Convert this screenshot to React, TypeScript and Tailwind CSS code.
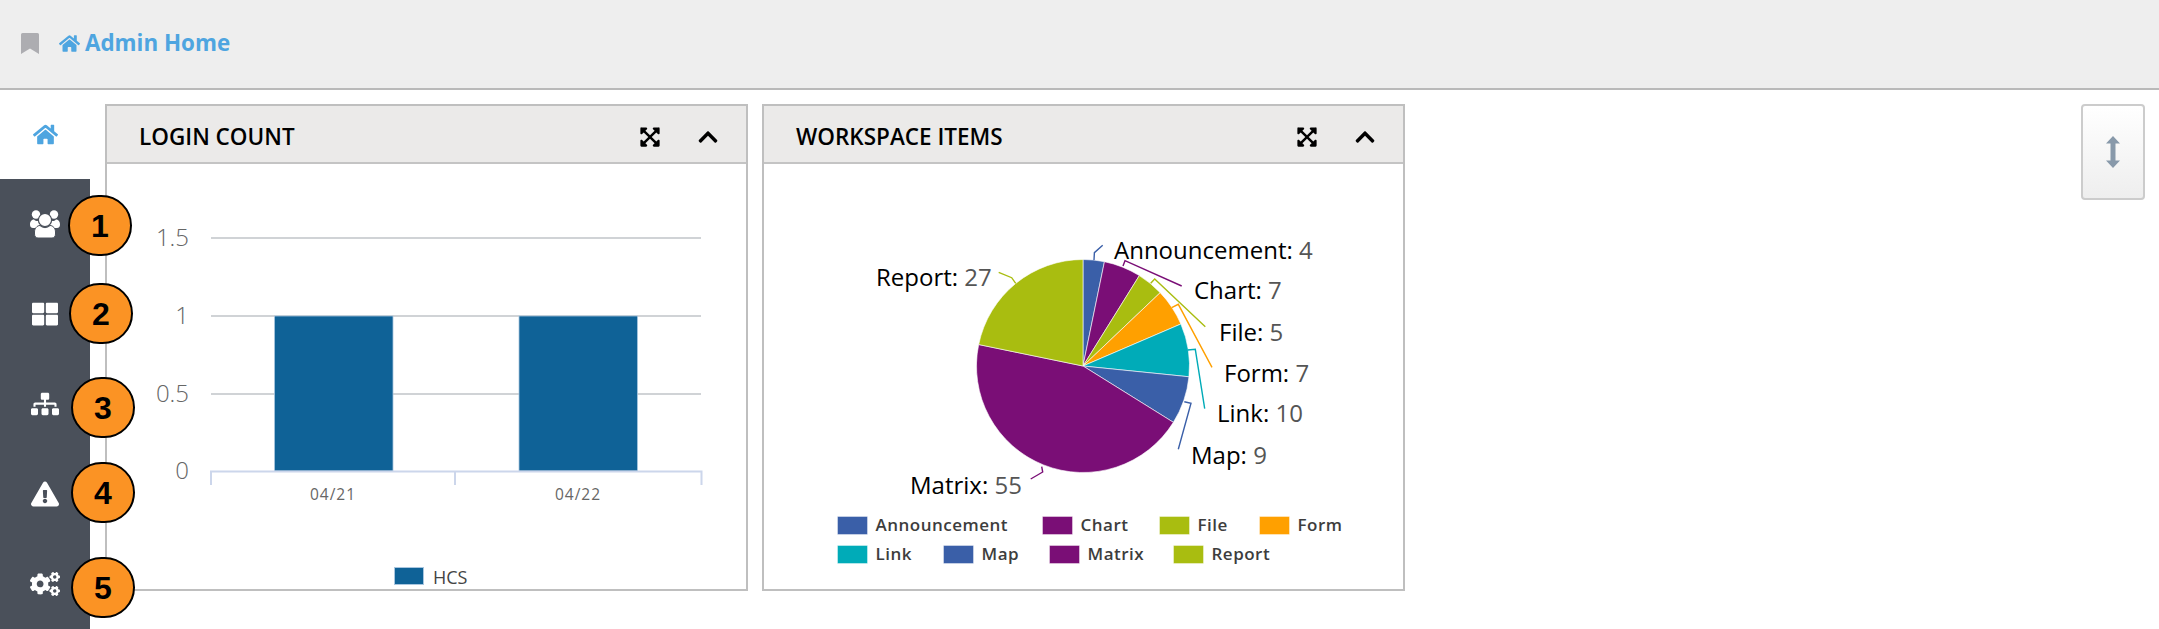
import * as React from 'react';
import {
  FaChevronUp,
  FaCogs,
  FaExclamationTriangle,
  FaExpandArrowsAlt,
  FaHome,
  FaSitemap,
  FaThLarge
} from 'react-icons/fa';

const BLUE = '#3a5fa8';
const PURPLE = '#7a0e76';
const LIME = '#a9bd10';
const ORANGE = '#ffa000';
const TEAL = '#00abb8';

const slices = [
  { name: 'Announcement', value: 4, color: BLUE, line: '1094,260 1094.4,252.7 1102.7,245.3', x: 1114, y: 259 },
  { name: 'Chart', value: 7, color: PURPLE, line: '1123,266 1125,260.7 1181.7,286', x: 1194, y: 299 },
  { name: 'File', value: 5, color: LIME, line: '1150.7,283.3 1154.7,279 1205.3,326.7', x: 1219, y: 341 },
  { name: 'Form', value: 7, color: ORANGE, line: '1171.7,307.7 1178.3,304.3 1212,367.3', x: 1224, y: 382 },
  { name: 'Link', value: 10, color: TEAL, line: '1187.7,350 1195.3,349.3 1204.7,408.7', x: 1217, y: 422 },
  { name: 'Map', value: 9, color: BLUE, line: '1184.3,401.7 1191,403.3 1178.3,449.3', x: 1191, y: 464 },
  { name: 'Matrix', value: 55, color: PURPLE, line: '1041.7,466.7 1042.7,472 1030.7,479', x: 910, y: 494 },
  { name: 'Report', value: 27, color: LIME, line: '1015.7,283.3 1011.7,277.7 998.7,272.3', x: 876, y: 286 }
];

const pieLegend = [
  { name: 'Announcement', color: BLUE, x: 837, y: 516 },
  { name: 'Chart', color: PURPLE, x: 1042, y: 516 },
  { name: 'File', color: LIME, x: 1159, y: 516 },
  { name: 'Form', color: ORANGE, x: 1259, y: 516 },
  { name: 'Link', color: TEAL, x: 837, y: 545 },
  { name: 'Map', color: BLUE, x: 943, y: 545 },
  { name: 'Matrix', color: PURPLE, x: 1049, y: 545 },
  { name: 'Report', color: LIME, x: 1173, y: 545 }
];

const markers = [
  { label: '1', left: 'left-[68px]', top: 'top-[195px]' },
  { label: '2', left: 'left-[69px]', top: 'top-[283px]' },
  { label: '3', left: 'left-[71px]', top: 'top-[377px]' },
  { label: '4', left: 'left-[71px]', top: 'top-[462px]' },
  { label: '5', left: 'left-[71px]', top: 'top-[557px]' }
];

function piePaths() {
  const cx = 1083;
  const cy = 366;
  const r = 106.5;
  const total = slices.reduce((sum, s) => sum + s.value, 0);
  let start = 0;
  return slices.map(s => {
    const end = start + (s.value / total) * Math.PI * 2;
    const x1 = cx + r * Math.sin(start);
    const y1 = cy - r * Math.cos(start);
    const x2 = cx + r * Math.sin(end);
    const y2 = cy - r * Math.cos(end);
    const large = end - start > Math.PI ? 1 : 0;
    start = end;
    return { ...s, d: `M${cx} ${cy}L${x1} ${y1}A${r} ${r} 0 ${large} 1 ${x2} ${y2}Z` };
  });
}

// font awesome 4 look, the package only has the newer shapes
function GroupIcon() {
  return (
    <svg viewBox="0 0 30 28" className="h-[28px] w-[30px] fill-white">
      <circle cx="6" cy="4.5" r="4.2" />
      <circle cx="24" cy="4.5" r="4.2" />
      <path d="M0 14.5C0 11 2 9.5 4 9.5C6 11.5 8 11.5 10 10V18H3C1 18 0 16.500 0 14.5Z" />
      <path d="M30 14.500C30 11 28 9.500 26 9.500C24 11.500 22 11.500 20 10V18H27C29 18 30 16.500 30 14.500Z" />
      <circle cx="15" cy="10" r="6.6" stroke="#4a505a" strokeWidth="1.2" />
      <path
        d="M4.500 22C4.500 18.500 7 15.500 10 15.500C13 18.300 17 18.300 20 15.500C23 15.500 25.500 18.500 25.500 22V24C25.500 26.500 24 28 22 28H8C6 28 4.500 26.500 4.500 24Z"
        stroke="#4a505a"
        strokeWidth="1"
      />
    </svg>
  );
}

function Panel({ title, children }: { title: string; children: React.ReactNode }) {
  return (
    <div className="flex h-[487px] w-[643px] flex-col border-2 border-[#bfbfbf]">
      <div className="flex h-[58px] shrink-0 items-center border-b-2 border-[#c4c4c4] bg-[#ebeae9] pt-[6px] pl-[32px]">
        <span className="text-[22.5px] font-semibold text-black">{title}</span>
        <FaExpandArrowsAlt className="ml-auto text-[22px] text-black" />
        <FaChevronUp className="mr-[27px] ml-[36px] text-[22px] text-black" />
      </div>
      <div className="min-h-0 flex-1">{children}</div>
    </div>
  );
}

function LoginChart() {
  const grid = [238, 316, 394];
  return (
    <svg viewBox="107 164 639 425" className="block h-[425px] w-[639px]">
      {grid.map(y => (
        <line key={y} x1={211} x2={701} y1={y} y2={y} stroke="#c0c4c8" strokeWidth={1.5} />
      ))}
      {[
        ['1.5', 246],
        ['1', 324],
        ['0.5', 402],
        ['0', 479]
      ].map(([t, y]) => (
        <text key={t} x={189} y={y} textAnchor="end" className="fill-[#666666] text-[24px] font-light">
          {t}
        </text>
      ))}
      <rect x={274.5} y={316} width={118.5} height={155} fill="#0f6297" stroke="#a9c6df" strokeWidth={0.8} />
      <rect x={519} y={316} width={118.5} height={155} fill="#0f6297" stroke="#a9c6df" strokeWidth={0.8} />
      <path d="M211 485V471.5H701.5V485M455 471.5V485" fill="none" stroke="#ccd6eb" strokeWidth={2} />
      <text x={333} y={500} textAnchor="middle" className="fill-[#666666] text-[15.5px] tracking-[1px]">
        04/21
      </text>
      <text x={578} y={500} textAnchor="middle" className="fill-[#666666] text-[15.5px] tracking-[1px]">
        04/22
      </text>
      <rect x={394.5} y={567.5} width={29} height={17} fill="#0f6297" stroke="#a9c6df" />
      <text x={433} y={584} className="fill-[#444444] text-[18px]">
        HCS
      </text>
    </svg>
  );
}

function WorkspaceChart() {
  return (
    <svg viewBox="764 164 639 425" className="block h-[425px] w-[639px]">
      {piePaths().map(s => (
        <path key={s.name} d={s.d} fill={s.color} stroke="#ffffff" strokeWidth={0.6} />
      ))}
      {slices.map(s => (
        <polyline key={s.name} points={s.line} fill="none" stroke={s.color} strokeWidth={1.4} />
      ))}
      {slices.map(s => (
        <text key={s.name} x={s.x} y={s.y} className="fill-black text-[24px]">
          {s.name}: <tspan className="fill-[#555555]">{s.value}</tspan>
        </text>
      ))}
      {pieLegend.map(l => (
        <g key={l.name}>
          <rect x={l.x + 0.5} y={l.y + 0.5} width={30} height={18} fill={l.color} stroke="#ffffff" strokeOpacity={0.4} />
          <text x={l.x + 38.5} y={l.y + 15} className="fill-[#3d3d3d] text-[17px] font-semibold tracking-[0.5px]">
            {l.name}
          </text>
        </g>
      ))}
    </svg>
  );
}

export default function App() {
  return (
    <div className="relative flex h-screen flex-col overflow-hidden bg-white font-['Open_Sans',sans-serif]">
      <div className="flex h-[90px] shrink-0 items-center border-b-2 border-[#b9b9b9] bg-[#eeeeee] pb-[2px] pl-[21px]">
        <svg viewBox="0 0 18 21" className="h-[21px] w-[18px] fill-[#adadb1]">
          <path d="M0 1.500Q0 0 1.500 0H16.500Q18 0 18 1.500V21L9 15.500L0 21Z" />
        </svg>
        <FaHome className="ml-[20px] text-[21px] text-[#4ea5e0]" />
        <span className="ml-[5px] text-[22.4px] font-bold text-[#4ea5e0]">Admin Home</span>
      </div>

      <div className="flex min-h-0 flex-1">
        <div className="flex w-[90px] shrink-0 flex-col">
          <div className="flex h-[89px] shrink-0 items-center justify-center bg-white">
            <FaHome className="text-[25px] text-[#4ea5e0]" />
          </div>
          <div className="flex-1 bg-[#4a505a] text-white">
            <div className="flex h-[90px] items-center justify-center">
              <GroupIcon />
            </div>
            <div className="flex h-[90px] items-center justify-center">
              <FaThLarge className="text-[26px]" />
            </div>
            <div className="flex h-[90px] items-center justify-center">
              <FaSitemap className="text-[28px]" />
            </div>
            <div className="flex h-[90px] items-center justify-center">
              <FaExclamationTriangle className="text-[28px]" />
            </div>
            <div className="flex h-[90px] items-center justify-center">
              <FaCogs className="text-[30px]" />
            </div>
          </div>
        </div>

        <div className="flex flex-1 items-start gap-[14px] pt-[14px] pl-[15px]">
          <Panel title="LOGIN COUNT">
            <LoginChart />
          </Panel>
          <Panel title="WORKSPACE ITEMS">
            <WorkspaceChart />
          </Panel>
          <button className="mr-[14px] ml-auto flex h-[96px] w-[64px] items-center justify-center rounded-[4px] border-2 border-[#cccccc] bg-gradient-to-b from-white to-[#eeeeee]">
            <svg viewBox="0 0 14 32" className="h-[32px] w-[14px] fill-[#8899aa]">
              <path d="M7 0L14 7.500H9.500V24.500H14L7 32L0 24.500H4.500V7.500H0Z" />
            </svg>
          </button>
        </div>
      </div>

      {markers.map(m => (
        <div
          key={m.label}
          className={`absolute flex h-[61px] w-[64px] items-center justify-center rounded-full border-2 border-black bg-[#fb9324] font-['Liberation_Sans',sans-serif] text-[32px] font-bold text-black ${m.left} ${m.top}`}
        >
          {m.label}
        </div>
      ))}
    </div>
  );
}
